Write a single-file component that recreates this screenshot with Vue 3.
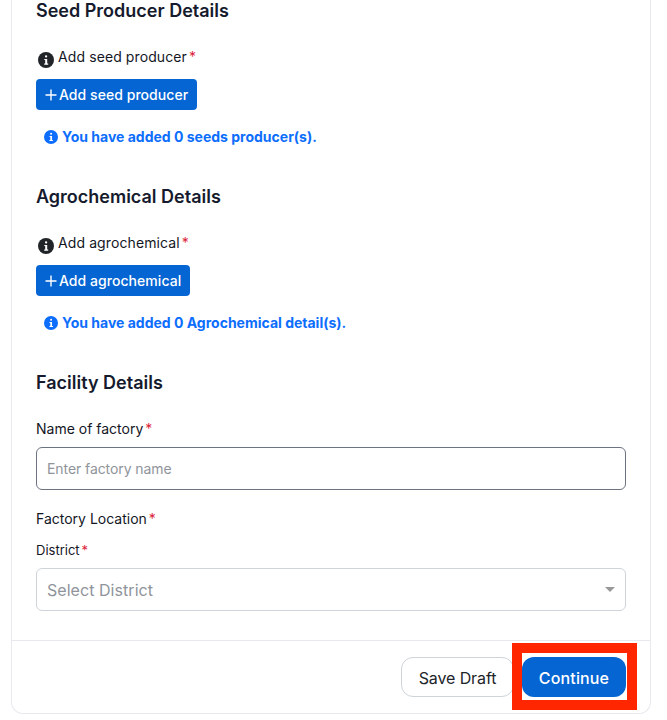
<script setup>
const groups = [
  { title: "Seed Producer Details", label: "Add seed producer", action: "Add seed producer", note: "You have added 0 seeds producer(s)." },
  { title: "Agrochemical Details", label: "Add agrochemical", action: "Add agrochemical", note: "You have added 0 Agrochemical detail(s)." },
];
</script>

<template>
  <div class="page">
    <div class="card">
      <div class="body">
        <section class="group" v-for="g in groups" :key="g.title">
          <h3 class="heading">{{ g.title }}</h3>
          <div class="add-label">
            <svg class="info-dark" viewBox="0 0 16 16" width="16" height="16">
              <circle cx="8" cy="8" r="8" fill="#212529" />
              <rect x="7" y="3.2" width="2.2" height="2.2" rx="1" fill="#fff" />
              <path d="M6.3 6.9h2.9v4.6h1v1.2H6.2v-1.2h1V8.1h-.9z" fill="#fff" />
            </svg>
            <span>{{ g.label }}<i class="req">*</i></span>
          </div>
          <button class="btn-add">
            <svg viewBox="0 0 12 12" width="12" height="12">
              <path d="M6 .5v11M.5 6h11" stroke="#fff" stroke-width="1.4" fill="none" />
            </svg>
            {{ g.action }}
          </button>
          <div class="note">
            <svg viewBox="0 0 16 16" width="14" height="14">
              <circle cx="8" cy="8" r="8" fill="#0d6efd" />
              <rect x="7" y="3.2" width="2.2" height="2.2" rx="1" fill="#fff" />
              <path d="M6.3 6.9h2.9v4.6h1v1.2H6.2v-1.2h1V8.1h-.9z" fill="#fff" />
            </svg>
            <span>{{ g.note }}</span>
          </div>
        </section>

        <section class="facility">
          <h3 class="heading">Facility Details</h3>
          <label class="field-label first">Name of factory<i class="req">*</i></label>
          <input class="text-input" type="text" placeholder="Enter factory name" />
          <div class="field-label loc">Factory Location<i class="req">*</i></div>
          <div class="small-label">District<i class="req">*</i></div>
          <div class="select">
            <span>Select District</span>
            <b class="caret"></b>
          </div>
        </section>
      </div>

      <div class="footer">
        <button class="btn-draft">Save Draft</button>
        <div class="highlight">
          <button class="btn-continue">Continue</button>
        </div>
      </div>
    </div>
  </div>
</template>

<style>
body {
  margin: 0;
  background: #fff;
}
</style>

<style scoped>
.page {
  width: 667px;
  height: 720px;
  overflow: hidden;
  font-family: Inter, "Liberation Sans", sans-serif;
  color: #14171f;
}
.card {
  box-sizing: border-box;
  margin-left: 11px;
  width: 640px;
  height: 714px;
  border: 1px solid #e7e9ee;
  border-top: none;
  border-radius: 0 0 12px 12px;
  display: flex;
  flex-direction: column;
}
.body {
  flex: 1;
  padding: 0 24px;
}
.group {
  height: 186px;
}
.heading {
  margin: 0;
  font-size: 18px;
  line-height: 22px;
  font-weight: 600;
  color: #151a2d;
}
.add-label {
  display: flex;
  align-items: flex-start;
  gap: 4px;
  margin-top: 25px;
  margin-left: 2px;
  font-size: 14px;
  line-height: 20px;
  letter-spacing: 0.1px;
  height: 32px;
}
.info-dark {
  margin-top: 5px;
}
.req {
  color: #dc1f3c;
  font-style: normal;
  margin-left: 2px;
}
.btn-add {
  display: flex;
  align-items: center;
  gap: 2px;
  height: 31px;
  padding: 0 9px;
  background: #0565d3;
  color: #fff;
  border: none;
  border-radius: 4px;
  font-family: inherit;
  font-size: 14px;
  font-weight: 500;
  letter-spacing: 0.05px;
}
.note {
  display: flex;
  align-items: center;
  gap: 4px;
  margin-top: 17px;
  margin-left: 8px;
  font-size: 14px;
  line-height: 20px;
  font-weight: 700;
  color: #0d6efd;
}
.field-label {
  display: block;
  font-size: 14px;
  line-height: 20px;
}
.field-label.first {
  margin-top: 25px;
  margin-bottom: 8px;
}
.field-label.loc {
  margin-top: 19px;
}
.small-label {
  margin-top: 11px;
  margin-bottom: 8px;
  font-size: 13px;
  line-height: 20px;
}
.text-input {
  display: block;
  box-sizing: border-box;
  width: 590px;
  height: 43px;
  padding: 0 10px;
  border: 1px solid #6c7380;
  border-radius: 6px;
  font-family: inherit;
  font-size: 14px;
  letter-spacing: -0.08px;
  outline: none;
}
.text-input::placeholder {
  color: #8f949b;
}
.select {
  box-sizing: border-box;
  width: 590px;
  height: 43px;
  padding: 0 10px;
  display: flex;
  align-items: center;
  justify-content: space-between;
  border: 1px solid #ced4da;
  border-radius: 6px;
  font-size: 16px;
  letter-spacing: 0.05px;
  color: #8f949b;
}
.caret {
  width: 0;
  height: 0;
  border-left: 5px solid transparent;
  border-right: 5px solid transparent;
  border-top: 5px solid #999;
}
.footer {
  box-sizing: border-box;
  height: 73px;
  border-top: 1px solid #e7e9ee;
  display: flex;
  justify-content: flex-end;
  align-items: flex-start;
  gap: 8px;
  padding: 16px 24px 0 0;
}
.btn-draft {
  width: 113px;
  height: 40px;
  padding-top: 2px;
  background: #fff;
  border: 1px solid #ced4da;
  border-radius: 12px;
  font-family: inherit;
  font-size: 16px;
  letter-spacing: -0.1px;
  color: #212529;
}
.highlight {
  position: relative;
}
.highlight::after {
  content: "";
  position: absolute;
  left: -10px;
  top: -14px;
  width: 125px;
  height: 67px;
  box-sizing: border-box;
  border: 10px solid #ff2600;
  pointer-events: none;
}
.btn-continue {
  display: block;
  width: 104px;
  height: 40px;
  padding-top: 2px;
  background: #0565d3;
  color: #fff;
  border: none;
  border-radius: 12px;
  font-family: inherit;
  font-size: 16px;
  font-weight: 500;
  letter-spacing: 0.15px;
}
</style>
